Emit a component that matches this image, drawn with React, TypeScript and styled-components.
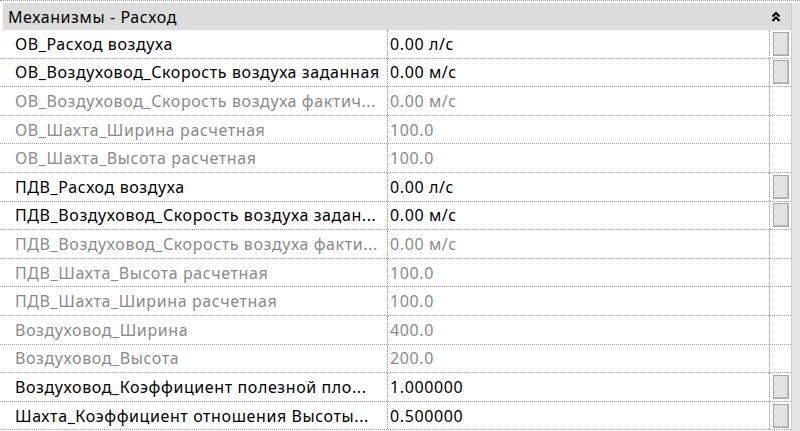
import styled, { createGlobalStyle } from 'styled-components';

const Global = createGlobalStyle`
  html, body { margin: 0; background: #fff; overflow: hidden; }
  body { font-family: "Noto Sans", "Open Sans", sans-serif; }
`;

const Frame = styled.div`
  width: 800px;
  height: 431px;
  display: flex;
  border-top: 1px dotted #9a9a9a;
  box-sizing: border-box;
  padding-top: 2px;
`;

const Table = styled.div`
  width: 791px;
  display: flex;
  flex-direction: column;
`;

const Scrollbar = styled.div`
  flex: 1;
  background: #e6e6e6;
  border-left: 1px solid #cfcfcf;
`;

const Header = styled.div`
  height: 27px;
  margin-left: 3px;
  background: #dcdcdc;
  display: flex;
  align-items: center;
  justify-content: space-between;
  padding: 0 10px 0 5px;
  font-size: 16px;
  letter-spacing: 0.6px;
  color: #000;
`;

const Row = styled.div<{ $muted?: boolean }>`
  height: 28.6px;
  box-sizing: border-box;
  display: grid;
  grid-template-columns: 388px 382px 1fr;
  border-bottom: 1px dotted #9a9a9a;
  font-size: 16px;
  letter-spacing: 0.6px;
  color: ${({ $muted }) => ($muted ? '#8a8a8a' : '#000')};
`;

const Name = styled.div`
  padding-left: 15px;
  display: flex;
  align-items: center;
  white-space: nowrap;
  overflow: hidden;
  border-right: 1px dotted #9a9a9a;
`;

const Value = styled.div`
  padding-left: 2px;
  display: flex;
  align-items: center;
  border-right: 1px dotted #9a9a9a;
`;

const BtnCell = styled.div`
  display: flex;
  align-items: center;
  justify-content: center;
  padding: 0 1px;
`;

const Btn = styled.div`
  width: 14px;
  height: 22px;
  background: #e2e2e2;
  border: 1px solid #a8a8a8;
  box-shadow: inset -1px -1px 0 #bcbcbc;
`;

const rows: [string, string, boolean][] = [
  ['ОВ_Расход воздуха', '0.00 л/с', false],
  ['ОВ_Воздуховод_Скорость воздуха заданная', '0.00 м/с', false],
  ['ОВ_Воздуховод_Скорость воздуха фактич...', '0.00 м/с', true],
  ['ОВ_Шахта_Ширина расчетная', '100.0', true],
  ['ОВ_Шахта_Высота расчетная', '100.0', true],
  ['ПДВ_Расход воздуха', '0.00 л/с', false],
  ['ПДВ_Воздуховод_Скорость воздуха задан...', '0.00 м/с', false],
  ['ПДВ_Воздуховод_Скорость воздуха факти...', '0.00 м/с', true],
  ['ПДВ_Шахта_Высота расчетная', '100.0', true],
  ['ПДВ_Шахта_Ширина расчетная', '100.0', true],
  ['Воздуховод_Ширина', '400.0', true],
  ['Воздуховод_Высота', '200.0', true],
  ['Воздуховод_Коэффициент полезной пло...', '1.000000', false],
  ['Шахта_Коэффициент отношения Высоты...', '0.500000', false],
];

export default function App() {
  return (
    <>
      <Global />
      <Frame>
        <Table>
          <Header>
            <span>Механизмы - Расход</span>
            <svg width="10" height="12" viewBox="0 0 10 12">
              <path d="M1.5 5.5 L5 2 L8.5 5.5 M1.5 10 L5 6.5 L8.5 10" stroke="#000" strokeWidth="2" fill="none" />
            </svg>
          </Header>
          {rows.map(([n, v, muted]) => (
            <Row key={n} $muted={muted}>
              <Name>{n}</Name>
              <Value>{v}</Value>
              <BtnCell>{!muted && <Btn />}</BtnCell>
            </Row>
          ))}
        </Table>
        <Scrollbar />
      </Frame>
    </>
  );
}
